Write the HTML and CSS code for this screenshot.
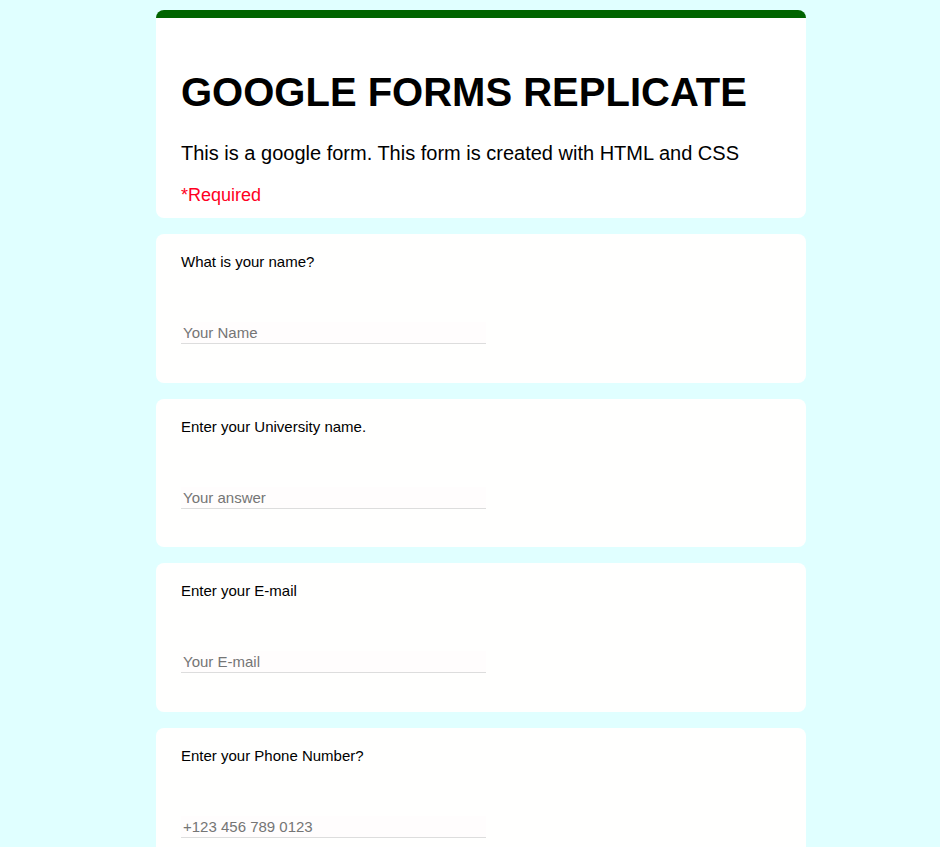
FILE: index.html
```html
<!DOCTYPE html>
<html lang="en">
<head>
<meta charset="utf-8">
<title>Google Forms Replicate</title>
<link rel="stylesheet" href="styles.css">
</head>
<body>
<main class="form">
  <section class="card header-card">
    <h1 class="title">GOOGLE FORMS REPLICATE</h1>
    <p class="desc">This is a google form. This form is created with HTML and CSS</p>
    <p class="required">*Required</p>
  </section>
  <section class="card question">
    <label class="q-label" for="name">What is your name?</label>
    <input class="q-input" id="name" type="text" placeholder="Your Name">
  </section>
  <section class="card question">
    <label class="q-label" for="uni">Enter your University name.</label>
    <input class="q-input" id="uni" type="text" placeholder="Your answer">
  </section>
  <section class="card question">
    <label class="q-label" for="email">Enter your E-mail</label>
    <input class="q-input" id="email" type="email" placeholder="Your E-mail">
  </section>
  <section class="card question">
    <label class="q-label" for="phone">Enter your Phone Number?</label>
    <input class="q-input" id="phone" type="tel" placeholder="+123 456 789 0123">
  </section>
</main>
</body>
</html>
```
FILE: styles.css
```css
html, body {
  margin: 0;
  padding: 0;
}
body {
  background: #e0ffff;
  font-family: "Liberation Sans", Arial, sans-serif;
  color: #000;
  padding-left: 22px;
}
.form {
  width: 650px;
  margin: 10px auto 0;
  display: flex;
  flex-direction: column;
  gap: 16px;
}
.card {
  background: #fffffe;
  border-radius: 8px;
  padding: 19px 25px 38.5px;
  box-sizing: border-box;
  display: flex;
  flex-direction: column;
  align-items: flex-start;
}
.header-card {
  background: #fff;
  border-top: 8px solid #006400;
  padding: 50px 25px 12px;
}
.title {
  margin: 0;
  font-size: 40px;
  font-weight: bold;
  line-height: 48px;
}
.desc {
  margin: 26px 0 0;
  font-size: 20px;
  line-height: 23px;
}
.required {
  margin: 20px 0 0;
  font-size: 18px;
  line-height: 21px;
  color: #ff0022;
}
.q-label {
  font-size: 15px;
  line-height: 17px;
}
.q-input {
  margin-top: 52px;
  width: 305px;
  height: 22px;
  box-sizing: border-box;
  border: none;
  border-bottom: 1px solid #ddd;
  background: #fffdfd;
  font-family: "Liberation Sans", Arial, sans-serif;
  font-size: 15px;
  padding: 0 2px;
  outline: none;
}
.q-input::placeholder {
  color: #757575;
}
```
